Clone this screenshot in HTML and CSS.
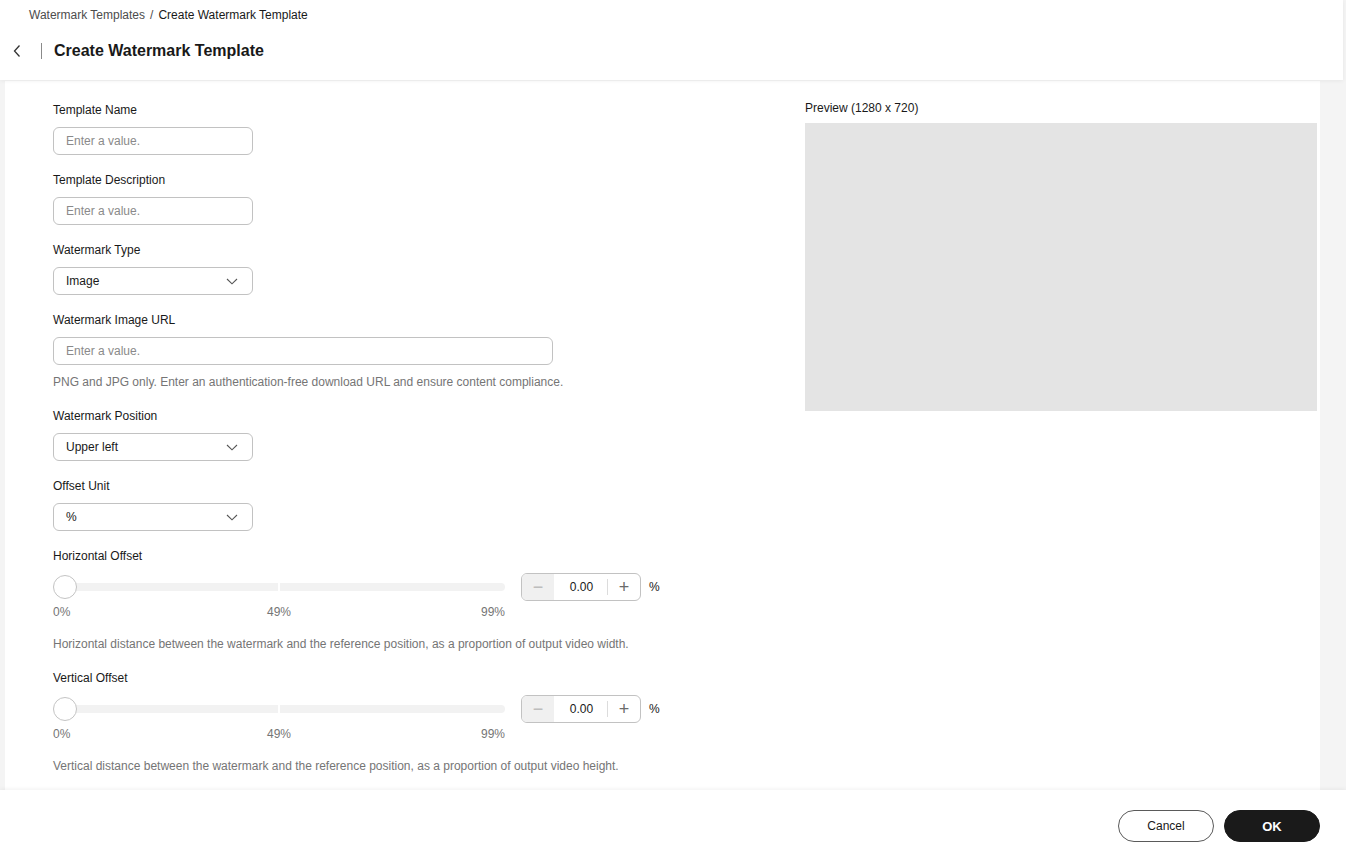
FILE: index.html
```html
<!DOCTYPE html>
<html lang="en">
<head>
<meta charset="utf-8">
<title>Create Watermark Template</title>
<link rel="stylesheet" href="styles.css">
</head>
<body>
<header class="header">
  <div class="breadcrumb"><span class="crumb-link">Watermark Templates</span><span class="crumb-sep">/</span><span class="crumb-current">Create Watermark Template</span></div>
  <div class="title-row">
    <svg class="back" width="10" height="14" viewBox="0 0 10 14"><path d="M7.5 1.5 L2.5 7 L7.5 12.5" fill="none" stroke="#333" stroke-width="1.3"/></svg>
    <span class="title-divider"></span>
    <h1 class="title">Create Watermark Template</h1>
  </div>
</header>
<main class="main">
  <div class="card">
    <div class="form-col">
      <div class="field">
        <label class="label">Template Name</label>
        <div class="input w200"><span class="placeholder">Enter a value.</span></div>
      </div>
      <div class="field">
        <label class="label">Template Description</label>
        <div class="input w200"><span class="placeholder">Enter a value.</span></div>
      </div>
      <div class="field">
        <label class="label">Watermark Type</label>
        <div class="input w200 select"><span class="value">Image</span><svg class="chev" width="12" height="7" viewBox="0 0 12 7"><path d="M1 1 L6 5.8 L11 1" fill="none" stroke="#555" stroke-width="1.1"/></svg></div>
      </div>
      <div class="field">
        <label class="label">Watermark Image URL</label>
        <div class="input w500"><span class="placeholder">Enter a value.</span></div>
        <p class="help help-url">PNG and JPG only. Enter an authentication-free download URL and ensure content compliance.</p>
      </div>
      <div class="field">
        <label class="label">Watermark Position</label>
        <div class="input w200 select"><span class="value">Upper left</span><svg class="chev" width="12" height="7" viewBox="0 0 12 7"><path d="M1 1 L6 5.8 L11 1" fill="none" stroke="#555" stroke-width="1.1"/></svg></div>
      </div>
      <div class="field">
        <label class="label">Offset Unit</label>
        <div class="input w200 select"><span class="value">%</span><svg class="chev" width="12" height="7" viewBox="0 0 12 7"><path d="M1 1 L6 5.8 L11 1" fill="none" stroke="#555" stroke-width="1.1"/></svg></div>
      </div>
      <div class="field">
        <label class="label">Horizontal Offset</label>
        <div class="slider-row">
          <div class="slider">
            <div class="track"><span class="track-seg"></span><span class="track-seg"></span></div>
            <span class="thumb"></span>
          </div>
          <div class="number">
            <span class="num-btn minus">&minus;</span>
            <span class="num-val">0.00</span>
            <span class="num-btn plus">+</span>
          </div>
          <span class="unit">%</span>
        </div>
        <div class="ticks"><span>0%</span><span>49%</span><span class="tick-end">99%</span></div>
        <p class="help help-slider">Horizontal distance between the watermark and the reference position, as a proportion of output video width.</p>
      </div>
      <div class="field">
        <label class="label">Vertical Offset</label>
        <div class="slider-row">
          <div class="slider">
            <div class="track"><span class="track-seg"></span><span class="track-seg"></span></div>
            <span class="thumb"></span>
          </div>
          <div class="number">
            <span class="num-btn minus">&minus;</span>
            <span class="num-val">0.00</span>
            <span class="num-btn plus">+</span>
          </div>
          <span class="unit">%</span>
        </div>
        <div class="ticks"><span>0%</span><span>49%</span><span class="tick-end">99%</span></div>
        <p class="help help-slider">Vertical distance between the watermark and the reference position, as a proportion of output video height.</p>
      </div>
    </div>
    <div class="preview-col">
      <div class="label">Preview (1280 x 720)</div>
      <div class="preview"></div>
    </div>
  </div>
</main>
<footer class="footer">
  <button class="btn btn-cancel">Cancel</button>
  <button class="btn btn-ok">OK</button>
</footer>
</body>
</html>
```

FILE: styles.css
```css
* { box-sizing: border-box; }
html, body { margin: 0; padding: 0; }
body {
  width: 1346px;
  height: 856px;
  overflow: hidden;
  background: #f4f4f4;
  font-family: "Liberation Sans", Arial, sans-serif;
  font-size: 12px;
  color: #191919;
  display: flex;
  flex-direction: column;
}
.header {
  position: relative;
  z-index: 2;
  height: 80px;
  margin-right: 3px;
  background: #fff;
  box-shadow: 0 1px 4px rgba(0,0,0,0.06);
  flex: none;
}
.breadcrumb {
  padding: 6px 0 0 29px;
  line-height: 18px;
  height: 24px;
}
.crumb-link { color: #4d4d4d; }
.crumb-sep { color: #4d4d4d; margin: 0 5px; }
.crumb-current { color: #191919; }
.title-row {
  display: flex;
  align-items: center;
  height: 54px;
  padding-left: 12px;
}
.back { display: block; }
.title-divider {
  width: 1px;
  height: 16px;
  background: #8a8a8a;
  margin-left: 19px;
  margin-right: 12px;
}
.title {
  margin: 0;
  font-size: 16px;
  font-weight: bold;
  color: #191919;
  line-height: 22px;
}
.main {
  flex: 1;
  display: flex;
  padding: 1px 26px 0 5px;
  min-height: 0;
}
.card {
  flex: 1;
  background: #fff;
  display: flex;
  padding: 0 0 0 48px;
}
.form-col {
  width: 752px;
  padding-top: 20px;
}
.field { margin-bottom: 16px; }
.label {
  display: block;
  line-height: 18px;
  color: #191919;
}
.input {
  margin-top: 8px;
  height: 28px;
  border: 1px solid #c2c2c2;
  border-radius: 6px;
  display: flex;
  align-items: center;
  padding: 0 12px;
}
.w200 { width: 200px; }
.w500 { width: 500px; }
.placeholder { color: #8a8a8a; }
.value { color: #191919; flex: 1; }
.select .chev { display: block; margin-right: 2px; }
.help {
  margin: 9px 0 1px;
  line-height: 17px;
  color: #757575;
}
.help-url { margin-bottom: 2px; }
.slider-row {
  margin-top: 8px;
  display: flex;
  align-items: center;
  height: 28px;
}
.slider {
  position: relative;
  width: 452px;
  height: 24px;
  display: flex;
  align-items: center;
}
.track {
  width: 100%;
  height: 8px;
  display: flex;
  gap: 2px;
}
.track-seg {
  flex: 1;
  background: #f2f2f2;
}
.track-seg:first-child { border-radius: 4px 0 0 4px; }
.track-seg:last-child { border-radius: 0 4px 4px 0; }
.thumb {
  position: absolute;
  left: 0;
  top: 0;
  width: 24px;
  height: 24px;
  border-radius: 50%;
  background: #fff;
  border: 1px solid #c4c4c4;
}
.number {
  margin-left: 16px;
  width: 120px;
  height: 28px;
  border: 1px solid #c2c2c2;
  border-radius: 6px;
  display: flex;
  align-items: center;
  overflow: hidden;
}
.num-btn {
  width: 32px;
  height: 100%;
  display: flex;
  align-items: center;
  justify-content: center;
  font-size: 18px;
  font-weight: 300;
  color: #6b6b6b;
}
.minus { background: #f0f0f0; color: #bdbdbd; }
.num-val {
  flex: 1;
  text-align: center;
  color: #191919;
  border-right: 1px solid #dcdcdc;
  line-height: 16px;
  padding-left: 2px;
}
.unit { margin-left: 8px; color: #191919; }
.ticks {
  width: 452px;
  display: grid;
  grid-template-columns: 1fr auto 1fr;
  margin-top: 3px;
  line-height: 16px;
  color: #757575;
}
.tick-end { justify-self: end; }
.help-slider { margin-top: 16px; margin-bottom: 1px; }
.preview-col {
  width: 512px;
  padding-top: 18px;
}
.preview {
  margin-top: 6px;
  width: 512px;
  height: 288px;
  background: #e4e4e4;
}
.footer {
  flex: none;
  height: 66px;
  background: #fff;
  box-shadow: 0 -1px 4px rgba(0,0,0,0.06);
  display: flex;
  justify-content: flex-end;
  align-items: flex-start;
  padding: 20px 26px 0 0;
  gap: 10px;
  position: relative;
  z-index: 2;
}
.btn {
  width: 96px;
  height: 32px;
  border-radius: 16px;
  font-family: "Liberation Sans", Arial, sans-serif;
  font-size: 12px;
  cursor: pointer;
}
.btn-cancel {
  background: #fff;
  border: 1px solid #5a5a5a;
  color: #191919;
}
.btn-ok {
  background: #1a1a1a;
  border: 1px solid #1a1a1a;
  color: #fff;
  font-weight: bold;
  font-size: 13px;
}
```
